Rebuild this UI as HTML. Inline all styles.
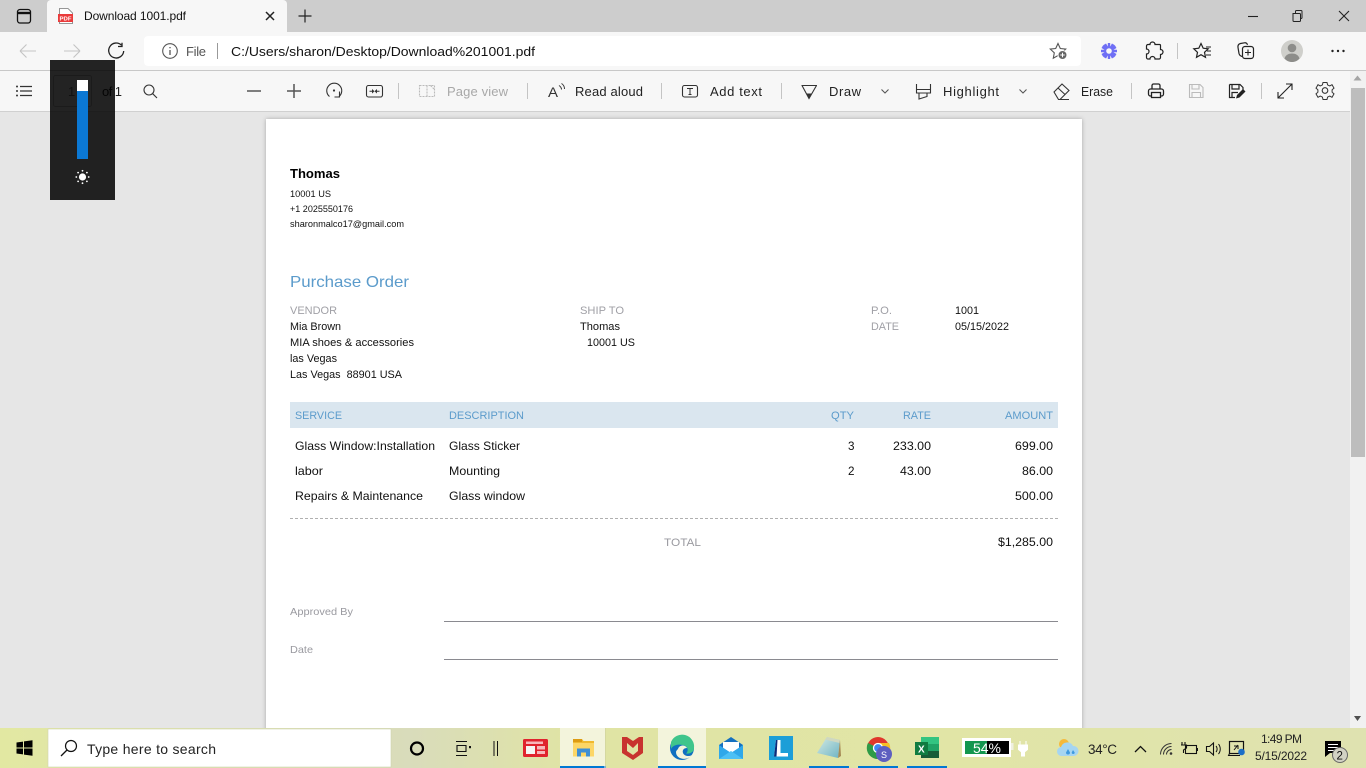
<!DOCTYPE html>
<html><head><meta charset="utf-8"><title>Download 1001.pdf</title>
<style>
html,body{margin:0;padding:0;width:1366px;height:768px;overflow:hidden;background:#e6e6e6}
svg{display:block;position:absolute;left:0;top:0}
text{font-family:"Liberation Sans",sans-serif;white-space:pre}
.u{font-size:13px;fill:#222}
.d{font-size:11px;fill:#111}
.g{font-size:11px;fill:#a0a0a6}
.b{font-size:11px;fill:#5b9bcb}
.i{fill:none;stroke:#333;stroke-width:1.1}
</style></head><body>
<svg width="1366" height="768" viewBox="0 0 1366 768" xmlns="http://www.w3.org/2000/svg">
<defs>
<linearGradient id="tb" x1="0" x2="1" y1="0" y2="0">
<stop offset="0" stop-color="#e2e8a2"/><stop offset=".3" stop-color="#d9dcbb"/><stop offset=".42" stop-color="#e0e4a4"/><stop offset=".7" stop-color="#e1e5a6"/><stop offset="1" stop-color="#dfe2b0"/>
</linearGradient>
<linearGradient id="np" x1="0" x2="1" y1="0" y2="1"><stop offset="0" stop-color="#d5ebe4"/><stop offset="1" stop-color="#6fb4c4"/></linearGradient>
<filter id="sh" x="-3%" y="-3%" width="106%" height="106%"><feDropShadow dx="0" dy="0" stdDeviation="2" flood-color="#000" flood-opacity=".28"/></filter>
</defs>

<!-- chrome backgrounds -->
<rect width="1366" height="768" fill="#e6e6e6"/>
<rect width="1366" height="32" fill="#cdcdcd"/>
<rect y="32" width="1366" height="79" fill="#f7f7f7"/>
<rect y="70" width="1366" height="1" fill="#c8c8c8"/>
<rect y="111" width="1366" height="1" fill="#d0d0d0"/>
<path d="M47 32V4a4 4 0 0 1 4-4H283a4 4 0 0 1 4 4V32Z" fill="#f7f7f7"/>
<rect x="144" y="36" width="937" height="30" rx="4" fill="#fff"/>

<!-- tab strip -->
<rect x="17.5" y="9.5" width="13" height="13.500" rx="2.500" fill="none" stroke="#111" stroke-width="1.300"/>
<path d="M18 13H30" stroke="#111" stroke-width="2.400"/>
<path d="M59.500 8.500H68L72.500 13V23.500H59.500Z" fill="#fff" stroke="#777" stroke-width=".8"/>
<rect x="58" y="14" width="15" height="8" fill="#ea3b3b"/>
<text x="59.500" y="20.500" font-size="5.500" font-weight="bold" fill="#fff" textLength="12" lengthAdjust="spacingAndGlyphs">PDF</text>
<text x="84" y="20" font-size="12" fill="#111" textLength="102">Download 1001.pdf</text>
<path d="M266 12l8 8M274 12l-8 8" stroke="#222" stroke-width="1.500" fill="none"/>
<path d="M305 9.500V22.500M298.500 16H311.500" stroke="#222" stroke-width="1.200" fill="none"/>
<path d="M1248 16.500H1258" stroke="#222" stroke-width="1.100"/>
<path d="M1293 13.500h6.500a1 1 0 0 1 1 1v6a1 1 0 0 1-1 1h-5.500a1 1 0 0 1-1-1ZM1295.500 13.500V11.500a1 1 0 0 1 1-1h4.500a1 1 0 0 1 1 1v6a1 1 0 0 1-1 1h-.5" fill="none" stroke="#222" stroke-width="1"/>
<path d="M1339 11l10 10M1349 11l-10 10" stroke="#222" stroke-width="1.100"/>

<!-- nav -->
<path d="M20 51H36M20 51l6.500-6.500M20 51l6.500 6.500" class="i" style="stroke:#c4c4c4"/>
<path d="M64 51H80M80 51l-6.500-6.500M80 51l-6.500 6.500" class="i" style="stroke:#c4c4c4"/>
<path d="M121.500 45.200A7.500 7.500 0 1 0 123.700 51" class="i" style="stroke:#222;stroke-width:1.300"/>
<path d="M122 42.800V46.500H118" class="i" style="stroke:#222;stroke-width:1.300"/>
<circle cx="170" cy="51" r="7.300" class="i" style="stroke:#555"/>
<path d="M170 50V55M170 47V48.200" class="i" style="stroke:#555;stroke-width:1.300"/>
<text x="186" y="56" class="u" style="fill:#555" textLength="20">File</text>
<rect x="217" y="43" width="1" height="16" fill="#999"/>
<text x="231" y="56" class="u" textLength="304" lengthAdjust="spacingAndGlyphs" style="fill:#111">C:/Users/sharon/Desktop/Download%201001.pdf</text>

<!-- right address icons -->
<path d="M1058 43.500l2.300 5 5.400.6-4 3.700 1 5.400-4.700-2.700-4.700 2.700 1-5.400-4-3.700 5.400-.6Z" class="i" style="stroke:#555"/>
<circle cx="1062.500" cy="55" r="4.500" fill="#666" stroke="#fff"/>
<path d="M1060.300 55h4.400M1062.500 52.800v4.400" stroke="#fff" stroke-width="1"/>
<g stroke="#6f6ff5" stroke-width="2.400" fill="none"><path d="M1109 43v16M1101 51h16M1103.300 45.300l11.400 11.400M1114.700 45.300l-11.400 11.400M1105 44.100l8 13.800M1113 44.100l-8 13.800M1102.100 47l13.800 8M1115.900 47l-13.800 8"/></g>
<circle cx="1109" cy="51" r="2.800" fill="#f7f7f7"/>
<path d="M1150 44.500a2.500 2.500 0 0 1 5 0h4.500a1 1 0 0 1 1 1v4a2.500 2.500 0 0 1 0 5v3a1.500 1.500 0 0 1-1.500 1.500h-4a2.500 2.500 0 0 0-5 0h-2a1.500 1.500 0 0 1-1.500-1.500v-3.500a2.500 2.500 0 0 0 0-5v-3a1.500 1.500 0 0 1 1.500-1.500Z" class="i" style="stroke:#222;stroke-width:1.200"/>
<rect x="1177" y="43" width="1" height="16" fill="#c4c4c4"/>
<path d="M1201 43.500l2.200 4.700 5 .6-3.700 3.500 1 5-4.500-2.600-4.500 2.600 1-5-3.700-3.500 5-.6Z" class="i" style="stroke:#222;stroke-width:1.200"/>
<path d="M1206 47h5M1207 51h4M1206 55h5" stroke="#222" stroke-width="1.100"/>
<path d="M1243 56.500c-2 0-3.500-1-4-3l-1-6c-.3-2 .5-3.500 2.500-4l4-.7c1.500-.2 2.500.5 3 2" class="i" style="stroke:#222;stroke-width:1.200"/>
<rect x="1242.500" y="46.500" width="11" height="12" rx="2.500" fill="#f7f7f7" stroke="#222" stroke-width="1.200"/>
<path d="M1248 49.500v6M1245 52.500h6" stroke="#222" stroke-width="1.100"/>
<circle cx="1292" cy="51" r="11" fill="#cfcfcb"/>
<circle cx="1292" cy="48" r="4.300" fill="#8d8d8a"/>
<path d="M1284.500 58.500c1-3.500 4-5 7.500-5s6.500 1.500 7.500 5c-2 2.300-4.500 3.500-7.500 3.500s-5.500-1.200-7.500-3.500Z" fill="#8d8d8a"/>
<g fill="#222"><circle cx="1332.500" cy="51" r="1.200"/><circle cx="1338" cy="51" r="1.200"/><circle cx="1343.500" cy="51" r="1.200"/></g>

<!-- pdf toolbar -->
<g class="i" style="fill:none;stroke:#333;stroke-width:1.200">
<path d="M20 86.500H32M20 91H32M20 95.500H32"/>
</g>
<g fill="#333"><circle cx="17" cy="86.500" r="1"/><circle cx="17" cy="91" r="1"/><circle cx="17" cy="95.500" r="1"/></g>
<rect x="53.500" y="75.500" width="38" height="31" rx="2" fill="none" stroke="#bbb"/>
<text x="102" y="96" class="u" textLength="20">of 1</text>
<circle cx="149" cy="90" r="5" class="i"/><path d="M152.800 93.800L157 98" class="i"/>
<path d="M247 91H261" class="i" style="stroke:#555;stroke-width:1.500"/>
<path d="M287 91H301M294 84V98" class="i" style="stroke:#555;stroke-width:1.500"/>
<path d="M329.500 96.500A7.500 7.500 0 1 1 339 96.500M339.500 91.500V97H334.500" class="i" style="stroke:#333"/>
<circle cx="334" cy="90.500" r="1.100" fill="#333"/>
<rect x="366.500" y="85.500" width="16" height="11.500" rx="2" class="i"/>
<path d="M369.500 91.200h3M376.500 91.200h3" stroke="#333"/><path d="M372 89l2.500 2.200L372 93.500ZM377 89l-2.500 2.200L377 93.500Z" fill="#333"/>
<rect x="398" y="83" width="1" height="16" fill="#c4c4c4"/>
<path d="M419.500 85.500h15l0 11h-15ZM427 85.500v11M430.500 85.500l4 4" class="i" style="stroke:#bbb;stroke-dasharray:2 1"/>
<text x="447" y="96" class="u" textLength="61" style="fill:#a8a8a8">Page view</text>
<rect x="527" y="83" width="1" height="16" fill="#c4c4c4"/>
<text x="548" y="97" font-size="14" fill="#333" textLength="10" lengthAdjust="spacingAndGlyphs">A</text>
<path d="M559 85.500c1.500 1 2.500 2.300 2.500 4M561.500 83.500c2 1.200 3 3.300 3 5.500" class="i" style="stroke-width:1"/>
<text x="575" y="96" class="u" textLength="68">Read aloud</text>
<rect x="661" y="83" width="1" height="16" fill="#c4c4c4"/>
<rect x="682.500" y="85.500" width="15" height="11.500" rx="2" class="i"/>
<path d="M687 88.500h6M690 88.500v6M688.500 94.500h3" stroke="#333"/>
<text x="710" y="96" class="u" textLength="52">Add text</text>
<rect x="781" y="83" width="1" height="16" fill="#c4c4c4"/>
<path d="M801.500 85.500H817M802 85.500L809 98.500L816.500 85.500" class="i"/>
<path d="M806.500 93.500L809 98.500L811.500 93.500Z" fill="#333"/>
<text x="829" y="96" class="u" textLength="32">Draw</text>
<path d="M881.500 89.500L885 93L888.500 89.500" class="i" style="stroke:#555"/>
<path d="M916.500 84V89.500H930.500V84M916.500 89.500V93H930.500V89.500M919 93V99L927 96.500V93" class="i"/>
<text x="943" y="96" class="u" textLength="56">Highlight</text>
<path d="M1019.500 89.500L1023 93L1026.500 89.500" class="i" style="stroke:#555"/>
<path d="M1054 92L1062 84L1069 90.500L1060 99.500H1058.500ZM1058 88L1065 94.500M1060 99.500H1069" class="i"/>
<text x="1081" y="96" font-size="12.500" fill="#222" textLength="32" lengthAdjust="spacingAndGlyphs">Erase</text>
<rect x="1131" y="83" width="1" height="16" fill="#c4c4c4"/>
<path d="M1152 89V85.500a1.500 1.500 0 0 1 1.500-1.500h5a1.500 1.500 0 0 1 1.500 1.500V89M1152 96h-1.500a2 2 0 0 1-2-2v-3a2 2 0 0 1 2-2h11a2 2 0 0 1 2 2v3a2 2 0 0 1-2 2H1160" class="i" style="stroke:#222;stroke-width:1.300"/>
<rect x="1151.500" y="92.500" width="9" height="5" fill="none" stroke="#222" stroke-width="1.300"/>
<path d="M1189.500 84.500H1200L1203 87.500V97.500H1189.500ZM1192 84.500V89H1199V84.500M1192 97.500V92.500H1200.500V97.500" class="i" style="stroke:#bbb"/>
<path d="M1229.500 84.500H1240L1243 87.500V90M1229.500 84.500V97.500H1235M1232 84.500V89H1239V84.500M1232 97.500V92.500H1238" class="i" style="stroke:#222;stroke-width:1.200"/>
<path d="M1236 98.500l1-3.500 6-6 2.500 2.500-6 6Z" fill="#222"/>
<rect x="1261" y="83" width="1" height="16" fill="#c4c4c4"/>
<path d="M1278 98L1292 84M1286 84H1292V90M1278 92V98H1284" class="i" style="stroke:#222"/>
<circle cx="1325" cy="90.500" r="2.800" class="i"/>
<path d="M1323 82.500h4l.6 2.400 2.200 1 2.200-1.200 2 3.400-1.900 1.700v2.400l1.900 1.700-2 3.400-2.200-1.200-2.200 1-.6 2.400h-4l-.6-2.400-2.200-1-2.200 1.200-2-3.400 1.900-1.700v-2.400l-1.900-1.700 2-3.400 2.200 1.200 2.200-1Z" class="i" style="stroke-width:1"/>

<!-- scrollbar -->
<rect x="1350" y="71" width="16" height="657" fill="#f1f1f1"/>
<path d="M1353.500 80.500L1357.500 75.500L1361.500 80.500Z" fill="#a5a5a5"/>
<rect x="1351" y="88" width="14" height="369" fill="#bdbdbd"/>
<path d="M1354 716L1357.500 721L1361 716Z" fill="#505050"/>

<!-- document -->
<rect x="266" y="119" width="816" height="620" fill="#fff" filter="url(#sh)"/>
<text x="290" y="178" font-size="13" font-weight="bold" fill="#000" textLength="50" lengthAdjust="spacingAndGlyphs">Thomas</text>
<text x="290" y="197" font-size="9" fill="#111" textLength="41" lengthAdjust="spacingAndGlyphs">10001 US</text>
<text x="290" y="212" font-size="9" fill="#111" textLength="63" lengthAdjust="spacingAndGlyphs">+1 2025550176</text>
<text x="290" y="227" font-size="9" fill="#111" textLength="114" lengthAdjust="spacingAndGlyphs">sharonmalco17@gmail.com</text>
<text x="290" y="287" font-size="16" fill="#5b9bcb" textLength="119" lengthAdjust="spacingAndGlyphs">Purchase Order</text>

<text x="290" y="314" class="g" textLength="47" lengthAdjust="spacingAndGlyphs">VENDOR</text>
<text x="290" y="330" class="d" textLength="51" lengthAdjust="spacingAndGlyphs">Mia Brown</text>
<text x="290" y="346" class="d" textLength="124" lengthAdjust="spacingAndGlyphs">MIA shoes &amp; accessories</text>
<text x="290" y="362" class="d" textLength="47" lengthAdjust="spacingAndGlyphs">las Vegas</text>
<text x="290" y="378" class="d" textLength="112" lengthAdjust="spacingAndGlyphs">Las Vegas  88901 USA</text>
<text x="580" y="314" class="g" textLength="44" lengthAdjust="spacingAndGlyphs">SHIP TO</text>
<text x="580" y="330" class="d" textLength="40" lengthAdjust="spacingAndGlyphs">Thomas</text>
<text x="587" y="346" class="d" textLength="48" lengthAdjust="spacingAndGlyphs">10001 US</text>
<text x="871" y="314" class="g" textLength="21" lengthAdjust="spacingAndGlyphs">P.O.</text>
<text x="871" y="330" class="g" textLength="28" lengthAdjust="spacingAndGlyphs">DATE</text>
<text x="955" y="314" class="d" textLength="24" lengthAdjust="spacingAndGlyphs">1001</text>
<text x="955" y="330" class="d" textLength="54" lengthAdjust="spacingAndGlyphs">05/15/2022</text>

<rect x="290" y="402" width="768" height="26" fill="#dae6ef"/>
<text x="295" y="419" class="b" textLength="47" lengthAdjust="spacingAndGlyphs">SERVICE</text>
<text x="449" y="419" class="b" textLength="75" lengthAdjust="spacingAndGlyphs">DESCRIPTION</text>
<text x="831" y="419" class="b" textLength="23" lengthAdjust="spacingAndGlyphs">QTY</text>
<text x="903" y="419" class="b" textLength="28" lengthAdjust="spacingAndGlyphs">RATE</text>
<text x="1005" y="419" class="b" textLength="48" lengthAdjust="spacingAndGlyphs">AMOUNT</text>

<g>
<text x="295" y="450" font-size="12" fill="#111" textLength="140" lengthAdjust="spacingAndGlyphs">Glass Window:Installation</text>
<text x="449" y="450" font-size="12" fill="#111" textLength="71" lengthAdjust="spacingAndGlyphs">Glass Sticker</text>
<text x="848" y="450" font-size="12" fill="#111" textLength="6.500" lengthAdjust="spacingAndGlyphs">3</text>
<text x="893" y="450" font-size="12" fill="#111" textLength="38" lengthAdjust="spacingAndGlyphs">233.00</text>
<text x="1015" y="450" font-size="12" fill="#111" textLength="38" lengthAdjust="spacingAndGlyphs">699.00</text>
<text x="295" y="475" font-size="12" fill="#111" textLength="28" lengthAdjust="spacingAndGlyphs">labor</text>
<text x="449" y="475" font-size="12" fill="#111" textLength="51" lengthAdjust="spacingAndGlyphs">Mounting</text>
<text x="848" y="475" font-size="12" fill="#111" textLength="6.500" lengthAdjust="spacingAndGlyphs">2</text>
<text x="900" y="475" font-size="12" fill="#111" textLength="31" lengthAdjust="spacingAndGlyphs">43.00</text>
<text x="1022" y="475" font-size="12" fill="#111" textLength="31" lengthAdjust="spacingAndGlyphs">86.00</text>
<text x="295" y="500" font-size="12" fill="#111" textLength="128" lengthAdjust="spacingAndGlyphs">Repairs &amp; Maintenance</text>
<text x="449" y="500" font-size="12" fill="#111" textLength="76" lengthAdjust="spacingAndGlyphs">Glass window</text>
<text x="1015" y="500" font-size="12" fill="#111" textLength="38" lengthAdjust="spacingAndGlyphs">500.00</text>
</g>
<path d="M290 518.500H1058" stroke="#b0b0b0" stroke-dasharray="3 2"/>
<text x="664" y="546" font-size="11" fill="#9a9aa0" textLength="37" lengthAdjust="spacingAndGlyphs">TOTAL</text>
<text x="998" y="546" font-size="12" fill="#111" textLength="55" lengthAdjust="spacingAndGlyphs">$1,285.00</text>
<text x="290" y="615" font-size="10.500" fill="#9a9aa0" textLength="63" lengthAdjust="spacingAndGlyphs">Approved By</text>
<path d="M444 621.500H1058M444 659.500H1058" stroke="#8a8a90"/>
<text x="290" y="653" font-size="10.500" fill="#9a9aa0" textLength="23" lengthAdjust="spacingAndGlyphs">Date</text>

<!-- brightness popup -->
<rect x="50" y="60" width="65" height="140" fill="#000" fill-opacity=".86"/>
<text x="68" y="96" class="u" style="fill:#111">1</text>
<rect x="77" y="80" width="11" height="79" fill="#0b78d4"/>
<rect x="77" y="80" width="11" height="11" fill="#fff"/>
<circle cx="82.500" cy="177" r="3.600" fill="#fff"/>
<g fill="#fff"><circle cx="82.500" cy="170.800" r=".9"/><circle cx="82.500" cy="183.200" r=".9"/><circle cx="76.300" cy="177" r=".9"/><circle cx="88.700" cy="177" r=".9"/><circle cx="78.100" cy="172.600" r=".9"/><circle cx="86.900" cy="172.600" r=".9"/><circle cx="78.100" cy="181.400" r=".9"/><circle cx="86.900" cy="181.400" r=".9"/></g>

<!-- taskbar -->
<rect y="728" width="1366" height="40" fill="url(#tb)"/>
<g fill="#000"><path d="M16.500 742.500L23 741.600V747.500H16.500ZM24 741.400L32.500 740.200V747.500H24ZM16.500 748.500H23V754.400L16.500 753.500ZM24 748.500H32.500V755.800L24 754.600Z"/></g>
<rect x="48" y="729" width="343" height="38" fill="#fff" stroke="#cfd2b0" stroke-width=".6"/>
<circle cx="71" cy="746" r="5.500" fill="none" stroke="#111" stroke-width="1.200"/>
<path d="M67 750L61 756" stroke="#111" stroke-width="1.300"/>
<text x="87" y="754" font-size="14" fill="#222" textLength="129">Type here to search</text>
<circle cx="417" cy="748.500" r="6" fill="none" stroke="#000" stroke-width="2.200"/>
<path d="M456 741.500H467M456 755.500H467M457 745.500H466V751.500H457Z" fill="none" stroke="#111" stroke-width="1.100"/>
<rect x="469" y="746" width="2" height="2.200" fill="#111"/>
<path d="M494 741V756M497.500 741V756" stroke="#111" stroke-width="1"/>
<rect x="523" y="739" width="25" height="18" rx="1.500" fill="#e0232e"/>
<rect x="526" y="741.500" width="17" height="2.500" fill="#f7b6bb"/>
<rect x="526" y="746" width="9" height="8" fill="#f5f5f5"/><rect x="537" y="746" width="8" height="3.500" fill="#f7b6bb"/><rect x="537" y="751" width="8" height="3" fill="#f7b6bb"/>

<rect x="560" y="728" width="45" height="40" fill="#f3f4dc"/>
<rect x="560" y="766" width="44" height="2" fill="#0078d4"/>
<rect x="604" y="766" width="2" height="2" fill="#7fb4d8"/>
<rect x="605" y="728" width="1" height="38" fill="#d5d8a0"/>
<path d="M573 739h9l1.500 2H594v15.500H573Z" fill="#f0b92f"/><rect x="573" y="739" width="9" height="3" fill="#dd9b13"/>
<path d="M573 743H594V756.500H573Z" fill="#fcd666"/>
<path d="M577 756.500V748.500H590V756.500H586V752.500H581V756.500Z" fill="#3f8fd4"/>

<path d="M622 737L627 737L633 741L639 737L643 737V753L633 760L622 753Z" fill="#c8332f"/>
<path d="M627 743L633 748L638 743V751L633 755L627 751Z" fill="#e0e4a4"/>

<rect x="658" y="728" width="48" height="40" fill="#f3f4dc"/>
<rect x="658" y="766" width="48" height="2" fill="#0078d4"/>
<circle cx="682" cy="748" r="12" fill="#0f6fc0"/>
<path d="M671 742A12 12 0 0 1 694 748C694 752 690 754 686 753.500C689 751 688 746 683 745C678 744 673 745 671 749Z" fill="#3fc58c"/>
<path d="M678 749C679 745 685 744 687 748C684 748 682 750 683 753C684 756 689 757 692 755C688 761 676 760 676 752C676 751 677 750 678 749Z" fill="#f3f4dc"/>

<path d="M719 745L731 737L743 745V759H719Z" fill="#1470c0"/>
<path d="M723 742H739V748L731 753L723 748Z" fill="#fff"/>
<path d="M719 745L731 753L743 745V759H719Z" fill="#2fa8ea"/>
<path d="M719 759L731 751L743 759Z" fill="#4cc0f5"/>

<rect x="769" y="736" width="24" height="24" fill="#1c9ed8"/>
<path d="M776 740H780.500V753H788V756.500H774Z" fill="#fff"/>
<path d="M776 740L774 756.500H776.500L777.500 740Z" fill="#0a2a7a"/>

<rect x="809" y="766" width="40" height="2" fill="#0078d4"/>
<path d="M827 737L840 740L838 758L817 753Z" fill="url(#np)"/>
<path d="M827 737L840 740L839.500 743L825 739.500Z" fill="#cfd8c0"/>
<path d="M840 740L841 756L838 758Z" fill="#a58a55"/>

<rect x="858" y="766" width="40" height="2" fill="#0078d4"/>
<circle cx="878" cy="748" r="11" fill="#e0362c"/>
<path d="M868 743A11 11 0 0 0 878 759L884 749L874 746Z" fill="#2e9b47"/>
<path d="M878 743H889A11 11 0 0 1 878 759L883 749Z" fill="#f6bf26"/>
<circle cx="878" cy="748" r="4.500" fill="#4285f4" stroke="#fff" stroke-width="1.300"/>
<circle cx="884" cy="754" r="8" fill="#5e5fc0"/>
<text x="881" y="758" font-size="9" fill="#fff">S</text>

<rect x="907" y="766" width="40" height="2" fill="#0078d4"/>
<rect x="921" y="737" width="18" height="7" fill="#33c481"/><rect x="921" y="744" width="18" height="7" fill="#21a366"/><rect x="921" y="751" width="18" height="7" fill="#185c37"/>
<rect x="915" y="742" width="13" height="13" fill="#107c41"/>
<text x="918" y="752.500" font-size="10" font-weight="bold" fill="#fff">X</text>

<rect x="962" y="738" width="49" height="19" fill="#fff"/>
<rect x="965" y="741" width="22" height="13" fill="#12964e"/>
<rect x="987" y="741" width="22" height="13" fill="#000"/>
<rect x="1011" y="743" width="2.500" height="7" fill="#f0f0e0"/>
<text x="973" y="753" font-size="14" fill="#fff" textLength="28" lengthAdjust="spacingAndGlyphs">54%</text>
<path d="M1020 741V745M1026 741V745M1018.500 745H1027.500V749.500L1024.500 752V756H1021.500V752L1018.500 749.500Z" fill="#fff" stroke="#fff"/>

<!-- tray -->
<circle cx="1064" cy="744" r="5" fill="#f5b93a"/>
<path d="M1062 756a4.500 4.500 0 0 1-1-9 6.500 6.500 0 0 1 12-1 5 5 0 0 1 1 10Z" fill="#a5d5f2"/>
<path d="M1068 749l-2 3.500a2 2 0 0 0 4 0ZM1073 750l-1.300 2.500a1.500 1.500 0 0 0 3 0Z" fill="#3d9ae0"/>
<text x="1088" y="754" font-size="13.500" fill="#222" textLength="29">34°C</text>
<path d="M1135 752L1140.500 746.500L1146 752" fill="none" stroke="#111" stroke-width="1.300"/>
<path d="M1160.500 754.500a11 11 0 0 1 11-11M1163.500 754.500a8 8 0 0 1 8-8M1166.500 754.500a5 5 0 0 1 5-5" fill="none" stroke="#333" stroke-width="1"/>
<circle cx="1171" cy="753.500" r="1.300" fill="#333"/>
<rect x="1185.500" y="745.500" width="11" height="8" fill="none" stroke="#111" stroke-width="1.100"/><rect x="1196.500" y="748" width="1.500" height="3" fill="#111"/>
<path d="M1182 742V745M1185 742V745M1181 745H1186.500V748L1183.500 750V753" fill="none" stroke="#111" stroke-width="1.100"/>
<path d="M1206.500 746.500H1209.500L1213.500 743V755L1209.500 751.500H1206.500Z" fill="none" stroke="#111" stroke-width="1.100"/>
<path d="M1216 746a4.500 4.500 0 0 1 0 6M1218.500 744a8 8 0 0 1 0 10" fill="none" stroke="#111" stroke-width="1"/>
<rect x="1229.500" y="741.500" width="14" height="12" fill="none" stroke="#111" stroke-width="1.200"/>
<path d="M1229.500 753.500L1228.500 755.500H1240" fill="none" stroke="#111" stroke-width="1"/>
<path d="M1234 750L1238 745M1234 746H1238V749" fill="none" stroke="#111" stroke-width="1"/>
<circle cx="1241.500" cy="752" r="3.300" fill="#1c6fc8"/>
<text x="1261" y="743" font-size="12" fill="#222" textLength="41">1:49 PM</text>
<text x="1255" y="760" font-size="12" fill="#222" textLength="52">5/15/2022</text>
<path d="M1325 741H1341V753H1330L1325 757Z" fill="#000"/>
<path d="M1328 744.500H1338M1328 747.500H1338M1328 750.500H1335" stroke="#fff" stroke-width="1"/>
<circle cx="1340" cy="755" r="7.500" fill="#d2d2c4" stroke="#666" stroke-width="1"/>
<text x="1336.500" y="759.500" font-size="11.500" fill="#111">2</text>
</svg>
</body></html>
